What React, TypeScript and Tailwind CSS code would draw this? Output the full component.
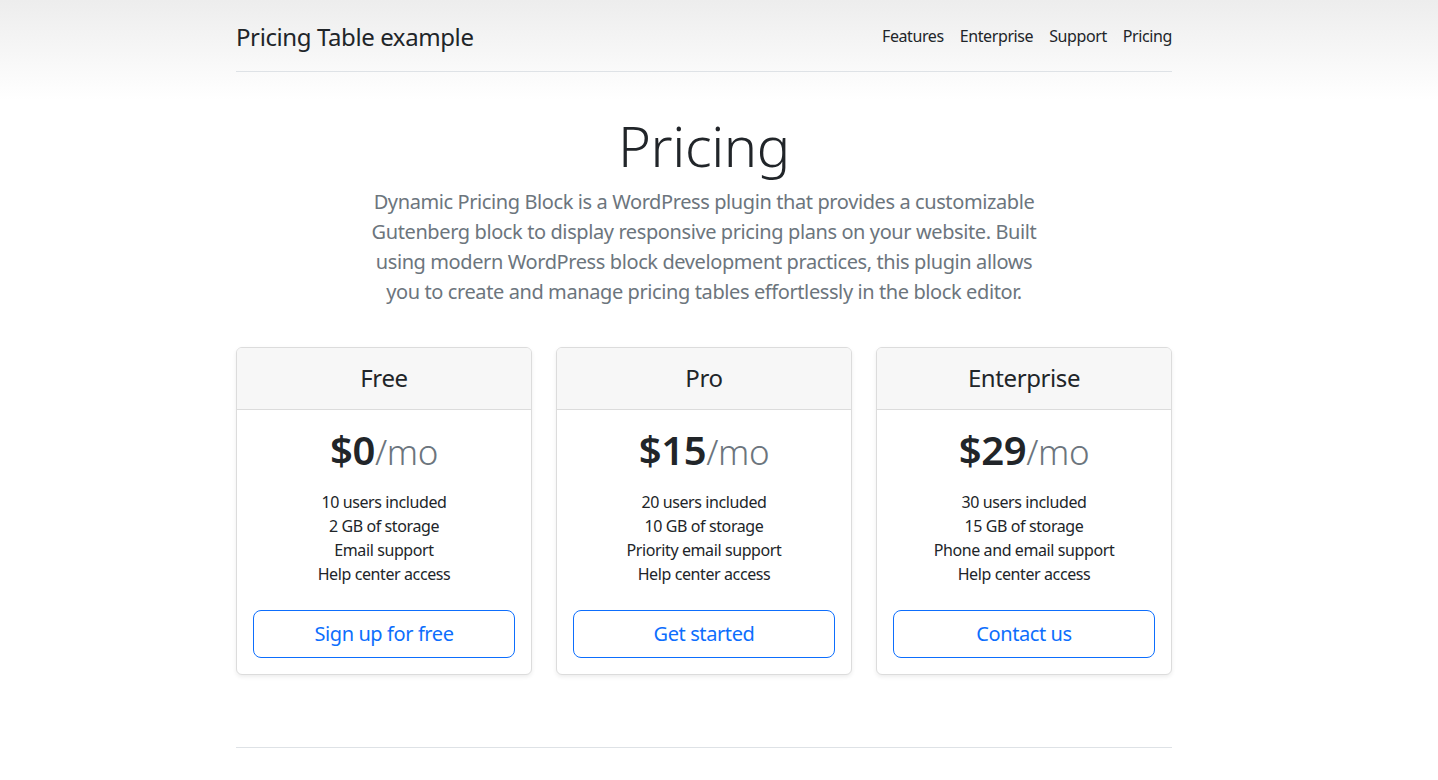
const plans = [
    {
        name: "Free",
        price: "$0",
        features: ["10 users included", "2 GB of storage", "Email support", "Help center access"],
        cta: "Sign up for free",
    },
    {
        name: "Pro",
        price: "$15",
        features: ["20 users included", "10 GB of storage", "Priority email support", "Help center access"],
        cta: "Get started",
    },
    {
        name: "Enterprise",
        price: "$29",
        features: ["30 users included", "15 GB of storage", "Phone and email support", "Help center access"],
        cta: "Contact us",
    },
];

const navLinks = ["Features", "Enterprise", "Support", "Pricing"];

const App = () => {
    return (
        <div className="min-h-[780px] bg-linear-to-b from-[#ededed] via-white via-[100px] to-white
                        pr-[30px] text-[#212529] font-['Segoe_UI','Noto_Sans',sans-serif] text-base
                        tracking-[-0.025em]">
            <div className="w-[960px] mx-auto px-3 py-4">

                {/* Header */}
                <header className="flex items-center pb-[15px] mb-6 border-b border-[#dee2e6]">
                    <span className="text-2xl leading-9 pt-0.5">Pricing Table example</span>
                    <nav className="ml-auto flex">
                        {navLinks.map((l, i) => (
                            <a
                                key={l}
                                href="#"
                                className={`py-2 leading-6 text-[#212529] ${i < navLinks.length - 1 ? "mr-4" : ""}`}
                            >
                                {l}
                            </a>
                        ))}
                    </nav>
                </header>

                {/* Intro */}
                <div className="max-w-[720px] mx-auto px-2 pt-4 pb-6 text-center">
                    <h1 className="text-[56px] leading-[1.2] font-light mb-2">Pricing</h1>
                    <p className="text-xl leading-[30px] text-[#6c757d] mb-4 whitespace-nowrap">
                        Dynamic Pricing Block is a WordPress plugin that provides a customizable<br />
                        Gutenberg block to display responsive pricing plans on your website. Built<br />
                        using modern WordPress block development practices, this plugin allows<br />
                        you to create and manage pricing tables effortlessly in the block editor.
                    </p>
                </div>

                {/* Cards */}
                <div className="grid grid-cols-3 gap-6 text-center">
                    {plans.map((p) => (
                        <div
                            key={p.name}
                            className="border border-[#dcdcdc] rounded-md shadow-[0_2px_4px_rgba(0,0,0,0.075)]
                                       overflow-hidden bg-white"
                        >
                            <div className="py-4 bg-[#f7f7f7] border-b border-[#dcdcdc]">
                                <h4 className="text-2xl leading-[1.2] font-normal">{p.name}</h4>
                            </div>
                            <div className="p-4">
                                <h1 className="text-[40px] leading-[1.2] font-semibold">
                                    {p.price}
                                    <small className="text-[35px] font-light text-[#6c757d]">/mo</small>
                                </h1>
                                <ul className="mt-4 mb-6 leading-6">
                                    {p.features.map((f) => (
                                        <li key={f}>{f}</li>
                                    ))}
                                </ul>
                                <button
                                    className="w-full border border-[#0d6efd] text-[#0d6efd] rounded-lg
                                               text-xl leading-[30px] px-4 py-2 hover:bg-[#0d6efd] hover:text-white"
                                >
                                    {p.cta}
                                </button>
                            </div>
                        </div>
                    ))}
                </div>

                {/* Footer */}
                <footer className="mt-[72px] pt-12 border-t border-[#dee2e6]" />
            </div>
        </div>
    );
};

export default App;
